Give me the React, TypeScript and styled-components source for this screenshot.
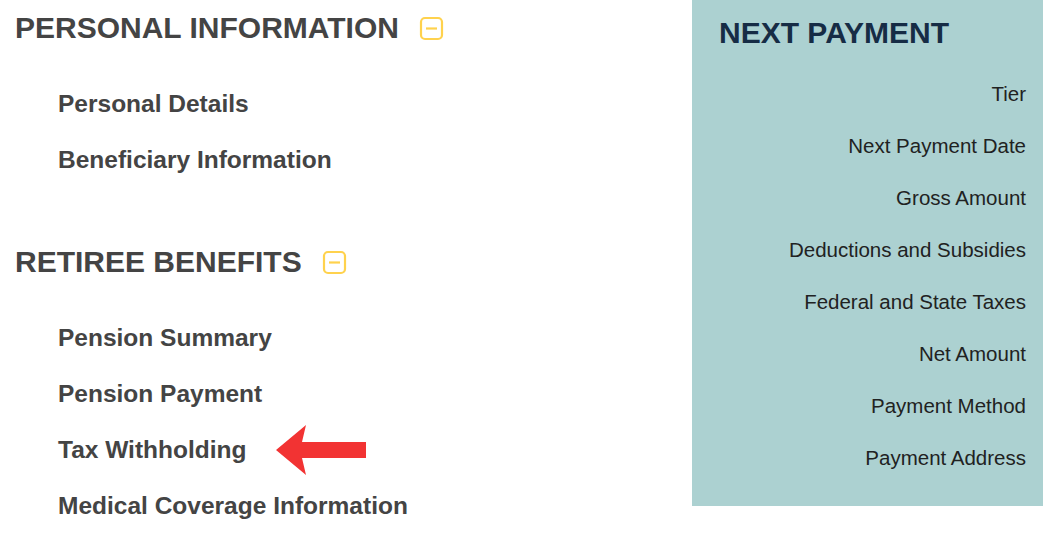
import React from "react";
import styled, { createGlobalStyle } from "styled-components";

const GlobalStyle = createGlobalStyle`
    body {
        margin: 0;
        background: #ffffff;
        font-family: "Liberation Sans", Arial, sans-serif;
    }
`;

const Page = styled.div`
    display: flex;
    width: 1043px;
    align-items: flex-start;
`;

const LeftColumn = styled.div`
    width: 692px;
    flex-shrink: 0;
    padding-top: 8px;
`;

const Section = styled.section<{ $gapTop?: number }>`
    margin-top: ${(p) => p.$gapTop ?? 0}px;
`;

const SectionHeading = styled.h2`
    display: flex;
    align-items: center;
    margin: 0 0 28px 0;
    padding-left: 15px;
    height: 40px;
    font-size: 30px;
    font-weight: bold;
    color: #444444;
`;

const ToggleIcon = styled.svg`
    margin-left: 20px;
    width: 25px;
    height: 25px;
`;

const ItemList = styled.ul`
    list-style: none;
    margin: 0;
    padding: 0 0 0 58px;
`;

const Item = styled.li`
    display: flex;
    align-items: center;
    height: 56px;
    font-size: 24.5px;
    font-weight: bold;
    color: #444444;
`;

const Arrow = styled.svg`
    margin-left: 28px;
    width: 92px;
    height: 52px;
`;

const Panel = styled.aside`
    flex: 1;
    background: #acd1d1;
    padding: 13px 17px 22px 27px;
`;

const PanelTitle = styled.h3`
    margin: 0 0 15px 0;
    height: 40px;
    line-height: 40px;
    font-size: 30px;
    font-weight: bold;
    color: #162c45;
`;

const PanelRow = styled.div`
    height: 52px;
    line-height: 52px;
    text-align: right;
    font-size: 20.5px;
    color: #1f2222;
`;

const MinusBox = () => (
    <ToggleIcon viewBox="0 0 25 25">
        <rect x="2" y="2" width="21" height="21" rx="4" fill="none" stroke="#ffd24d" strokeWidth="2.2" />
        <line x1="7" y1="12.5" x2="18" y2="12.5" stroke="#ffd24d" strokeWidth="2.2" />
    </ToggleIcon>
);

const RedArrow = () => (
    <Arrow viewBox="0 0 92 52">
        <polygon points="1,26 31,1 27,18 91,18 91,34 27,34 31,51" fill="#f23333" />
    </Arrow>
);

const personal = ["Personal Details", "Beneficiary Information"];
const retiree = ["Pension Summary", "Pension Payment", "Tax Withholding", "Medical Coverage Information"];
const paymentRows = [
    "Tier",
    "Next Payment Date",
    "Gross Amount",
    "Deductions and Subsidies",
    "Federal and State Taxes",
    "Net Amount",
    "Payment Method",
    "Payment Address",
];

export default function App() {
    return (
        <>
            <GlobalStyle />
            <Page>
                <LeftColumn>
                    <Section>
                        <SectionHeading>
                            PERSONAL INFORMATION
                            <MinusBox />
                        </SectionHeading>
                        <ItemList>
                            {personal.map((x) => (
                                <Item key={x}>{x}</Item>
                            ))}
                        </ItemList>
                    </Section>
                    <Section $gapTop={54}>
                        <SectionHeading>
                            RETIREE BENEFITS
                            <MinusBox />
                        </SectionHeading>
                        <ItemList>
                            {retiree.map((x) => (
                                <Item key={x}>
                                    {x}
                                    {x === "Tax Withholding" && <RedArrow />}
                                </Item>
                            ))}
                        </ItemList>
                    </Section>
                </LeftColumn>
                <Panel>
                    <PanelTitle>NEXT PAYMENT</PanelTitle>
                    {paymentRows.map((x) => (
                        <PanelRow key={x}>{x}</PanelRow>
                    ))}
                </Panel>
            </Page>
        </>
    );
}
